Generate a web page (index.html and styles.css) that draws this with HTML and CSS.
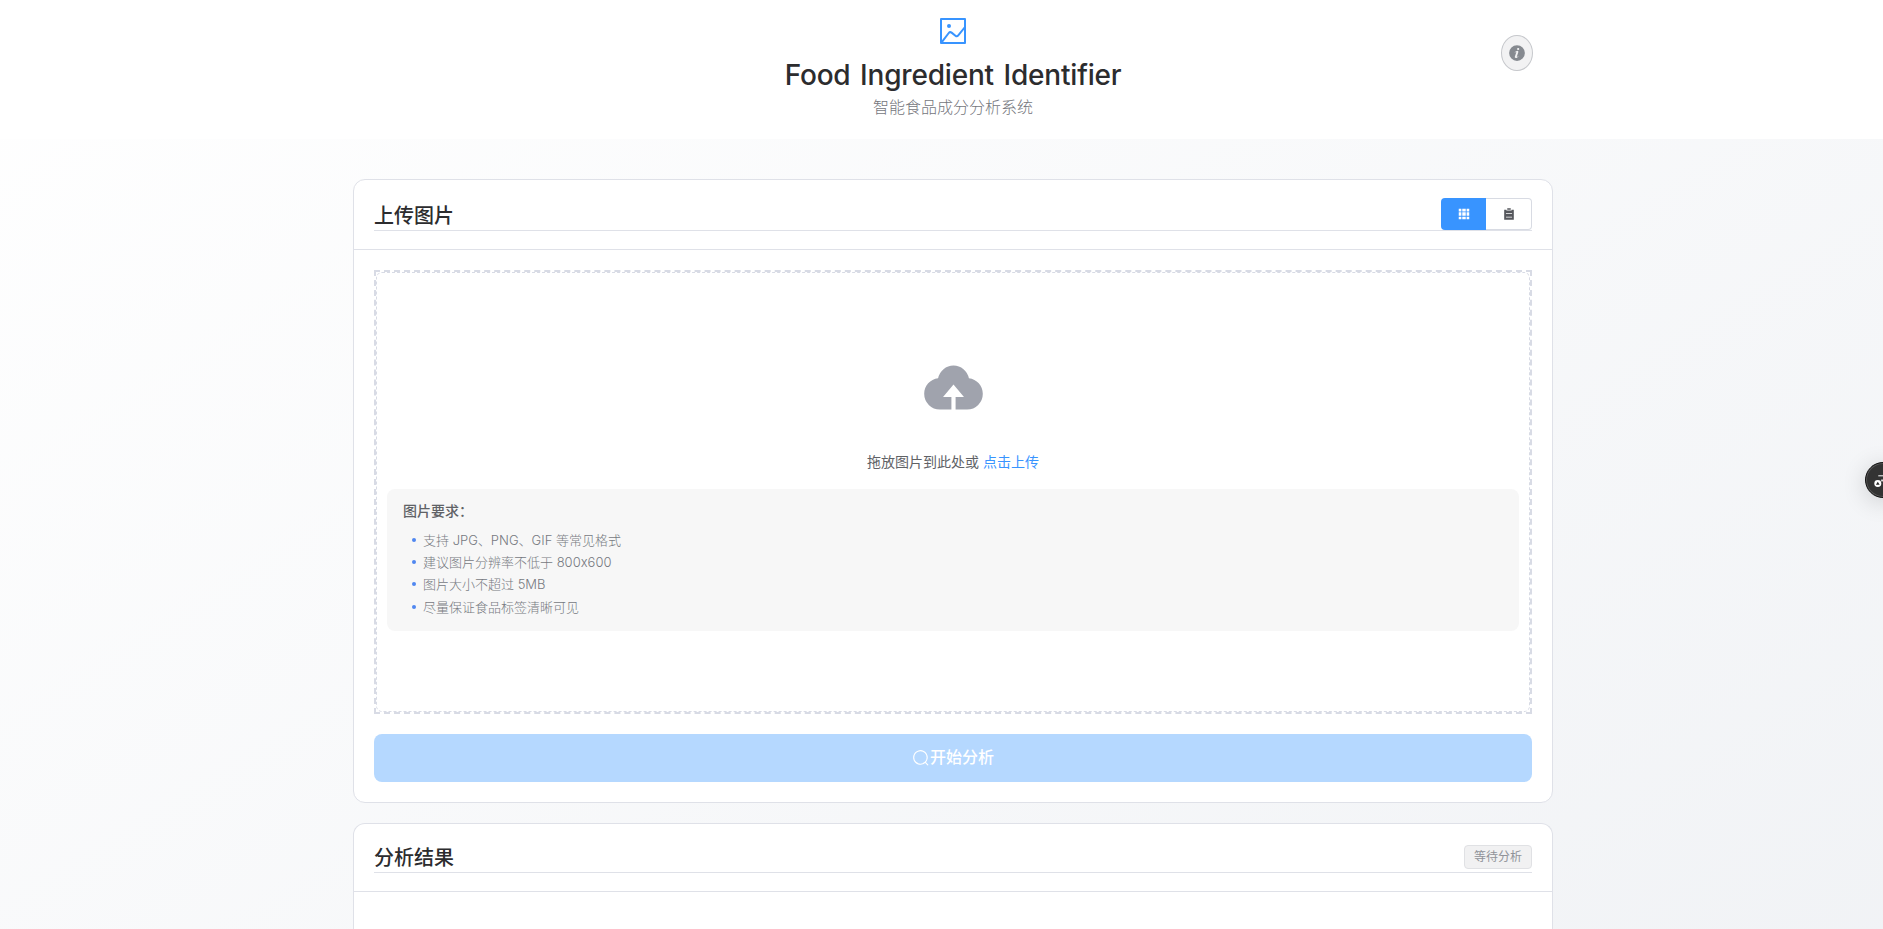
FILE: index.html
```html
<!DOCTYPE html>
<html lang="zh-CN">
<head>
<meta charset="utf-8">
<title>Food Ingredient Identifier</title>
<link rel="stylesheet" href="styles.css">
</head>
<body>
<header class="header">
  <div class="brand">
    <svg class="brand-icon" viewBox="0 0 1024 1024"><path d="M160 160v704h704V160zm-32-64h768a32 32 0 0 1 32 32v768a32 32 0 0 1-32 32H128a32 32 0 0 1-32-32V128a32 32 0 0 1 32-32"/><path d="M384 288q64 0 64 64t-64 64-64-64 64-64M185.408 876.992l-50.816-38.912L350.72 556.032a96 96 0 0 1 134.592-17.856l1.856 1.472 122.88 99.136a32 32 0 0 0 44.992-4.864l216-269.888 49.92 39.936-215.808 269.824-.256.32a96 96 0 0 1-135.04 14.464l-122.88-99.072-.64-.512a32 32 0 0 0-44.8 5.952z"/></svg>
    <h1 class="title">Food Ingredient Identifier</h1>
    <p class="subtitle">智能食品成分分析系统</p>
  </div>
  <button class="info-btn" aria-label="info"><svg viewBox="0 0 1024 1024"><path d="M512 64a448 448 0 1 1 0 896.064A448 448 0 0 1 512 64m67.2 275.072c33.28 0 60.288-23.104 60.288-57.344s-27.072-57.344-60.288-57.344c-33.28 0-60.16 23.104-60.16 57.344s26.88 57.344 60.16 57.344M590.912 699.2c0-6.848 2.368-24.64 1.024-34.752l-52.608 60.544c-10.88 11.456-24.512 19.392-30.912 17.28a12.992 12.992 0 0 1-8.256-14.72l87.68-276.992c7.168-35.136-12.544-67.2-54.336-71.296-44.096 0-108.992 44.736-148.48 101.504 0 6.784-1.28 23.68.064 33.792l52.544-60.608c10.88-11.328 23.552-19.328 29.952-17.152a12.8 12.8 0 0 1 7.808 16.128L388.48 728.576c-10.048 32.256 8.96 63.872 55.04 71.04 67.84 0 107.904-43.648 147.456-100.416z"/></svg></button>
</header>
<main class="main">
  <section class="card">
    <div class="card-header">
      <div class="card-title-row upload-row">
        <h2 class="card-title">上传图片</h2>
        <div class="btn-group">
          <button class="btn btn-primary" aria-label="grid"><svg viewBox="0 0 1024 1024"><path d="M640 384v256H384V384zm64 0h192v256H704zm-64 512H384V704h256zm64 0V704h192v192zm-64-768v192H384V128zm64 0h192v192H704zM320 384v256H128V384zm0 512H128V704h192zm0-768v192H128V128z"/></svg></button>
          <button class="btn" aria-label="list"><svg viewBox="0 0 1024 1024"><path d="M704 192h160v736H160V192h160v64h384zM288 512h448v-64H288zm0 256h448v-64H288zm96-576V96h256v96z"/></svg></button>
        </div>
      </div>
    </div>
    <div class="card-body">
      <div class="upload">
        <div class="dragger">
          <svg class="cloud" viewBox="0 0 1024 1024"><path d="M544 864V672h128L512 480 352 672h128v192H320v-1.6c-5.376.32-10.496 1.6-16 1.6A240 240 0 0 1 64 624c0-123.136 93.12-223.488 212.608-237.248A239.808 239.808 0 0 1 512 192a239.872 239.872 0 0 1 235.456 194.752c119.488 13.76 212.48 114.112 212.48 237.248a240 240 0 0 1-240 240c-5.376 0-10.56-1.28-16-1.6v1.6z"/></svg>
          <div class="upload-text">拖放图片到此处或 <em>点击上传</em></div>
          <div class="tips">
            <p class="tips-title">图片要求：</p>
            <ul class="tips-list">
              <li>支持 JPG、PNG、GIF 等常见格式</li>
              <li>建议图片分辨率不低于 800x600</li>
              <li>图片大小不超过 5MB</li>
              <li>尽量保证食品标签清晰可见</li>
            </ul>
          </div>
        </div>
      </div>
      <button class="analyze"><svg viewBox="0 0 1024 1024"><path d="m795.904 750.72 124.992 124.928a32 32 0 0 1-45.248 45.248L750.656 795.904a416 416 0 1 1 45.248-45.248zM480 832a352 352 0 1 0 0-704 352 352 0 0 0 0 704"/></svg><span>开始分析</span></button>
    </div>
  </section>
  <section class="card card-result">
    <div class="card-header">
      <div class="card-title-row result-row">
        <h2 class="card-title">分析结果</h2>
        <span class="tag">等待分析</span>
      </div>
    </div>
  </section>
</main>
<div class="float">
  <svg viewBox="0 0 36 36"><path d="M13 13.5h10" stroke="#ccc" stroke-width="1.4"/><path d="M16 18.5h8" stroke="#ddd" stroke-width="2"/><circle cx="12.5" cy="21.8" r="3.7" fill="#fff"/><path d="M12.5 19.8l2 3.2h-4z" fill="#222"/></svg>
</div>
</body>
</html>
```
FILE: styles.css
```css
* { box-sizing: border-box; }
html, body { height: 100%; }
body {
  display: flex;
  flex-direction: column;
  margin: 0;
  overflow: hidden;
  font-family: "Liberation Sans", "Noto Sans CJK SC", sans-serif;
  color: #303133;
  background: linear-gradient(148deg, #ffffff 0%, #f0f2f5 107%);
}
h1, h2, p, ul { margin: 0; padding: 0; }
svg { display: block; fill: currentColor; }
button { font: inherit; padding: 0; }

.header {
  position: relative;
  flex: none;
  height: 139px;
  padding-top: 15px;
  padding-left: 373px;
  background: #fff;
}
.brand {
  display: flex;
  flex-direction: column;
  align-items: center;
  width: 1160px;
}
.brand-icon { width: 32px; height: 32px; color: #3894ff; }
.title {
  margin-top: 8px;
  font: 500 28px/40px Inter, "Noto Sans CJK SC", sans-serif;
  letter-spacing: -.2px;
  word-spacing: 2.4px;
  color: #2c2c2e;
  white-space: nowrap;
}
.subtitle { margin-top: 1px; font-size: 16px; line-height: 24px; font-weight: 300; color: #74767c; }
.info-btn {
  position: absolute;
  top: 35px;
  left: 1501px;
  display: grid;
  place-items: center;
  width: 32px;
  height: 36px;
  border: 1px solid #c6c8cc;
  border-radius: 50%;
  background: #f2f2f3;
  color: #868a90;
}
.info-btn svg { width: 18px; height: 18px; }

.main {
  display: flex;
  flex: 1;
  flex-direction: column;
  gap: 20px;
  width: 1200px;
  margin: 40px 0 0 353px;
}
.card {
  border: 1px solid #dfe1e8;
  border-radius: 12px;
  background: #fff;
}
.card-result {
  flex: 1;
  border-bottom: 0;
  border-radius: 12px 12px 0 0;
}
.card-header { padding: 18px 20px; border-bottom: 1px solid #dfe1e8; }
.card-title-row {
  display: flex;
  justify-content: space-between;
  align-items: center;
  border-bottom: 1px solid #dfe1e8;
}
.upload-row { height: 33px; }
.result-row { height: 31px; }
.card-title { padding-top: 2px; font-size: 20px; line-height: 28px; font-weight: 500; color: #2c2c2e; }
.upload-row .card-title { padding-top: 3px; }
.btn-group { display: flex; }
.btn {
  display: grid;
  place-items: center;
  width: 46px;
  height: 32px;
  border: 1px solid #d8dbe3;
  border-left: 0;
  border-radius: 0 4px 4px 0;
  background: #fff;
  color: #55575c;
}
.btn-primary {
  width: 45px;
  border: 0;
  border-radius: 4px 0 0 4px;
  background: #3894ff;
  color: #fff;
}
.btn svg { width: 14px; height: 14px; }
.card-body { padding: 20px; }
.upload { height: 444px; border: 2px dashed #d8dbe5; }
.dragger {
  display: flex;
  flex-direction: column;
  align-items: center;
  height: 100%;
  padding: 80px 10px 0;
  border: 1px dashed #d8dbe5;
  border-radius: 6px;
}
.cloud { width: 67px; height: 67px; color: #a0a3ad; }
.upload-text { margin-top: 31px; font-size: 14px; line-height: 22px; color: #606266; }
.upload-text em { font-style: normal; color: #3894ff; }
.tips {
  width: 100%;
  height: 142px;
  margin-top: 16px;
  padding: 11px 16px;
  border-radius: 8px;
  background: #f7f7f7;
}
.tips-title { font-size: 14px; line-height: 22px; font-weight: 500; color: #606266; }
.tips-list { margin-top: 6.6px; list-style: none; }
.tips-list li {
  display: flex;
  align-items: center;
  gap: 7px;
  height: 22.3px;
  padding-left: 9px;
  font-family: Inter, "Noto Sans CJK SC", sans-serif;
  font-size: 13px;
  font-weight: 300;
  line-height: 22px;
  color: #76797f;
}
.tips-list li::before {
  content: "";
  width: 4px;
  height: 4px;
  border-radius: 50%;
  background: #5087f0;
}
.analyze {
  display: flex;
  justify-content: center;
  align-items: center;
  width: 100%;
  height: 48px;
  margin-top: 20px;
  border: 0;
  border-radius: 8px;
  background: #b5d8ff;
  color: #fff;
  font-size: 16px;
  font-weight: 500;
}
.analyze span { line-height: 24px; padding-bottom: 1px; }
.analyze svg { width: 18px; height: 18px; }
.tag {
  width: 68px;
  height: 24px;
  border: 1px solid #e0e1e4;
  border-radius: 4px;
  background: #f1f1f2;
  color: #909399;
  font-size: 12px;
  line-height: 22px;
  text-align: center;
}
.float {
  position: fixed;
  top: 462px;
  left: 1865px;
  width: 36px;
  height: 36px;
  border: 1px solid #111;
  border-radius: 50%;
  background: #333;
  box-shadow: inset 0 0 0 1px #555, 0 4px 24px rgba(0, 0, 0, .16);
}
```
